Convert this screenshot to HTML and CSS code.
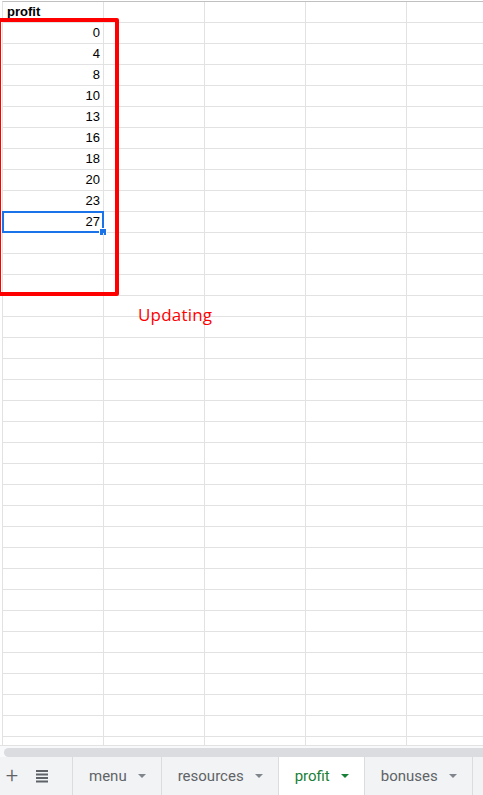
FILE: index.html
```html
<!DOCTYPE html>
<html>
<head>
<meta charset="utf-8">
<link rel="stylesheet" href="styles.css">
</head>
<body>
<div class="sheet">
  <div class="grid" id="grid"></div>
  <div class="outline"></div>
  <div class="note">Updating</div>
</div>
<div class="hscroll"><div class="thumb"></div></div>
<div class="tabbar">
  <div class="tool plus">+</div>
  <div class="tool menuicon">
    <svg width="14" height="14" viewBox="0 0 14 14"><rect x="1" y="1" width="12" height="2" fill="#5f6368"/><rect x="1" y="4.5" width="12" height="2" fill="#5f6368"/><rect x="1" y="8" width="12" height="2" fill="#5f6368"/><rect x="1" y="11.5" width="12" height="2" fill="#5f6368"/></svg>
  </div>
  <div class="tab">menu <span class="caret"></span></div>
  <div class="tab">resources <span class="caret"></span></div>
  <div class="tab active">profit <span class="caret"></span></div>
  <div class="tab">bonuses <span class="caret"></span></div>
</div>
<script src="app.js"></script>
</body>
</html>
```
FILE: app.js
```js
var vals = ["profit","0","4","8","10","13","16","18","20","23","27"];
var g = document.getElementById("grid");
for (var r = 0; r < 36; r++) {
  var row = document.createElement("div");
  row.className = "row";
  for (var c = 0; c < 5; c++) {
    var cell = document.createElement("div");
    cell.className = "cell";
    if (c === 0 && r < vals.length) {
      cell.textContent = vals[r];
      cell.className += r === 0 ? " head" : " num";
      if (r === 10) cell.className += " sel";
    }
    row.appendChild(cell);
  }
  g.appendChild(row);
}
```
FILE: styles.css
```css
html, body { margin: 0; padding: 0; background: #fff; }
body { width: 483px; height: 795px; overflow: hidden; font-family: "Liberation Sans", Arial, sans-serif; }
.sheet { position: relative; height: 744px; overflow: hidden; padding-top: 1px; }
.grid { border-top: 1px solid #c0c0c0; margin-left: 2px; border-left: 1px solid #e2e2e2; }
.row { display: flex; height: 20px; border-bottom: 1px solid #e2e2e2; }
.cell { flex: 0 0 101px; box-sizing: border-box; border-right: 1px solid #e2e2e2; font-size: 13px; line-height: 20px; color: #000; padding: 0 3px; position: relative; }
.cell.head { font-weight: bold; padding-left: 4px; }
.cell.num { text-align: right; }
.cell.sel::before { content: ""; position: absolute; left: -1px; top: -1px; right: -1px; bottom: -1px; border: 2px solid #1a73e8; }
.cell.sel::after { content: ""; position: absolute; right: -4px; bottom: -4px; width: 6px; height: 6px; background: #1a73e8; border: 1px solid #fff; }
.outline { position: absolute; left: -3px; top: 18px; width: 114px; height: 270px; border: 4px solid #ff0000; border-radius: 2px; }
.note { position: absolute; left: 138px; top: 303px; color: #ff0000; font-family: "Open Sans", "Noto Sans", sans-serif; font-size: 17px; letter-spacing: 0.2px; }
.hscroll { height: 12px; background: #f8f9fa; border-top: 1px solid #e2e2e2; padding: 2px 0 0 4px; box-sizing: border-box; }
.thumb { height: 9px; background: #dadce0; border-radius: 5px 0 0 5px; }
.tabbar { height: 38px; background: #f1f3f4; display: flex; align-items: stretch; font-family: Roboto, "Liberation Sans", sans-serif; font-size: 15px; color: #5f6368; }
.tool { display: flex; align-items: center; justify-content: center; }
.tool.plus { width: 24px; font-size: 22px; font-weight: 300; color: #5f6368; padding-bottom: 2px; box-sizing: border-box; }
.tool.menuicon { width: 49px; box-sizing: border-box; border-right: 1px solid #dadce0; padding-right: 12px; }
.tab { display: flex; align-items: center; padding: 0 15px 0 16px; border-right: 1px solid #dadce0; gap: 11px; }
.tab.active { background: #fff; color: #188038; }
.caret { width: 0; height: 0; border-left: 4px solid transparent; border-right: 4px solid transparent; border-top: 4px solid currentColor; }
.tab:not(.active) .caret { border-top-color: #80868b; }
```
